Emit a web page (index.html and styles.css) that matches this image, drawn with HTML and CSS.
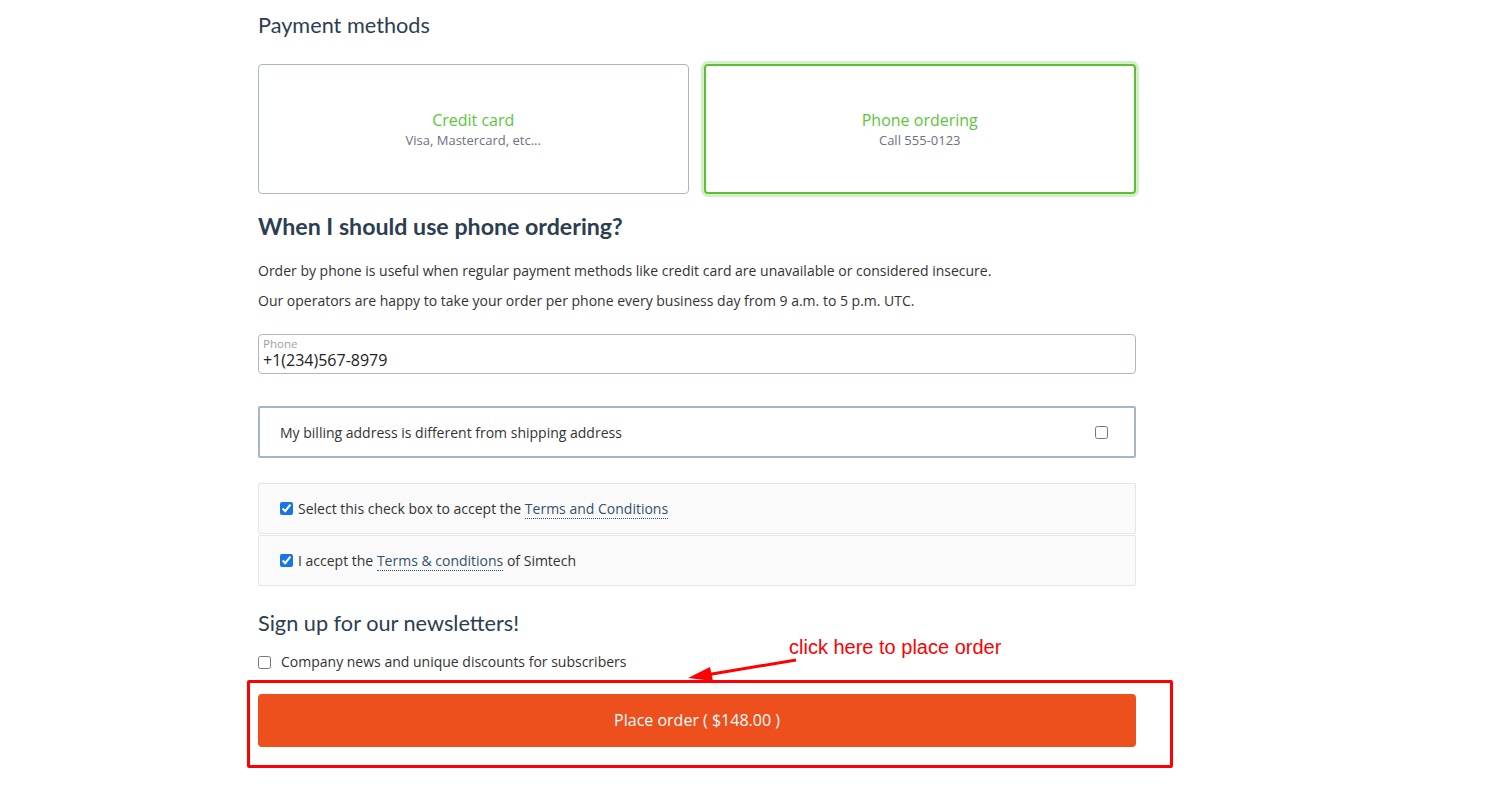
FILE: index.html
```html
<!DOCTYPE html>
<html>
<head>
<meta charset="utf-8">
<link rel="stylesheet" href="styles.css">
</head>
<body>
<div class="page">
  <main class="checkout">
    <h2 class="section-title">Payment methods</h2>
    <div class="methods">
      <div class="method">
        <div class="method-name">Credit card</div>
        <div class="method-desc">Visa, Mastercard, etc...</div>
      </div>
      <div class="method method-active">
        <div class="method-name">Phone ordering</div>
        <div class="method-desc">Call 555-0123</div>
      </div>
    </div>

    <h3 class="info-title">When I should use phone ordering?</h3>
    <p class="info-text">Order by phone is useful when regular payment methods like credit card are unavailable or considered insecure.</p>
    <p class="info-text second">Our operators are happy to take your order per phone every business day from 9 a.m. to 5 p.m. UTC.</p>

    <div class="field">
      <label class="field-label">Phone</label>
      <div class="field-value">+1(234)567-8979</div>
    </div>

    <div class="billing">
      <span>My billing address is different from shipping address</span>
      <input type="checkbox" class="cb">
    </div>

    <div class="terms">
      <div class="terms-row"><input type="checkbox" class="cb" checked><span>Select this check box to accept the <a class="term-link">Terms and Conditions</a></span></div>
      <div class="terms-row"><input type="checkbox" class="cb" checked><span>I accept the <a class="term-link">Terms &amp; conditions</a> of Simtech</span></div>
    </div>

    <h2 class="section-title news-title">Sign up for our newsletters!</h2>
    <div class="news-row"><input type="checkbox" class="cb cb-news"><span>Company news and unique discounts for subscribers</span></div>

    <div class="order-wrap">
      <button class="place-order">Place order ( $148.00 )</button>
      <div class="callout-box"></div>
      <div class="callout-text">click here to place order</div>
      <svg class="callout-arrow" width="130" height="30" viewBox="0 0 130 30">
        <line x1="108" y1="6" x2="18" y2="21" stroke="#ff0000" stroke-width="3"/>
        <polygon points="0,24 22,13 25,27" fill="#ff0000"/>
      </svg>
    </div>
  </main>
</div>
</body>
</html>
```
FILE: styles.css
```css
* { box-sizing: border-box; }
body {
  margin: 0;
  background: #fff;
  font-family: "Open Sans", "Noto Sans", sans-serif;
  color: #333;
}
.page { padding-left: 258px; padding-bottom: 60px; }
.checkout { width: 878px; padding-top: 10px; position: relative; }

.section-title {
  margin: 0;
  font-family: Lato, "Open Sans", sans-serif;
  font-weight: 400;
  font-size: 21.7px;
  line-height: 30px;
  color: #2c3e50;
}

.methods {
  display: flex;
  gap: 15px;
  margin-top: 24px;
}
.method {
  flex: 1;
  height: 130px;
  border: 1px solid #a9b7c6;
  border-radius: 4px;
  display: flex;
  flex-direction: column;
  align-items: center;
  justify-content: center;
  padding-top: 1px;
}
.method-active {
  border: 2px solid #5ebf31;
  box-shadow: 0 0 0 3px #d3efc7;
}
.method-name {
  font-size: 16px;
  line-height: 21px;
  color: #5cc53c;
}
.method-desc {
  font-size: 13px;
  line-height: 19px;
  color: #6b7280;
}

.info-title {
  margin: 17px 0 0;
  font-family: Lato, "Open Sans", sans-serif;
  font-weight: 700;
  font-size: 23.2px;
  line-height: 30px;
  color: #2c3e50;
}
.info-text {
  margin: 20px 0 0;
  font-size: 14px;
  line-height: 20px;
}
.info-text.second { margin-top: 10px; }

.field {
  margin-top: 23px;
  height: 40px;
  border: 1px solid #a9b7c6;
  border-radius: 4px;
  padding: 2px 4px 0;
}
.field-label {
  display: block;
  font-size: 11.5px;
  line-height: 13px;
  color: #9aa0a6;
}
.field-value {
  font-size: 16px;
  line-height: 20px;
  color: #222;
}

.billing {
  margin-top: 32px;
  height: 52px;
  border: 2px solid #a6b5c7;
  border-radius: 2px;
  padding: 0 26px 0 20px;
  display: flex;
  align-items: center;
  justify-content: space-between;
  font-size: 14px;
}
.cb {
  width: 13px;
  height: 13px;
  margin: 0;
  accent-color: #1a73e8;
}

.terms { margin-top: 25px; }
.terms-row {
  height: 51px;
  background: #fafafb;
  border: 1px solid #e2e5ea;
  border-radius: 2px;
  display: flex;
  align-items: center;
  gap: 5px;
  padding-left: 21px;
  font-size: 14px;
}
.terms-row + .terms-row { margin-top: 1px; height: 51px; }
.term-link {
  color: #34506d;
  border-bottom: 1px dotted #34506d;
  text-decoration: none;
}

.news-title { margin-top: 22px; }
.news-row {
  margin-top: 14px;
  display: flex;
  align-items: center;
  gap: 10px;
  font-size: 14px;
  line-height: 20px;
}

.order-wrap {
  margin-top: 22px;
  position: relative;
}
.place-order {
  display: block;
  width: 100%;
  height: 53px;
  border: none;
  border-radius: 4px;
  background: #ed4f1d;
  color: #fff;
  font-family: "Open Sans", sans-serif;
  font-size: 16px;
  padding-bottom: 2px;
}
.callout-box {
  position: absolute;
  left: -11px;
  top: -14px;
  width: 926px;
  height: 88px;
  border: 3px solid #ff0000;
  border-radius: 2px;
}
.callout-text {
  position: absolute;
  left: 531px;
  top: -58px;
  font-family: "Liberation Sans", Arial, sans-serif;
  font-size: 20px;
  color: #ff0000;
  white-space: nowrap;
}
.callout-arrow {
  position: absolute;
  left: 430px;
  top: -40px;
}
```
